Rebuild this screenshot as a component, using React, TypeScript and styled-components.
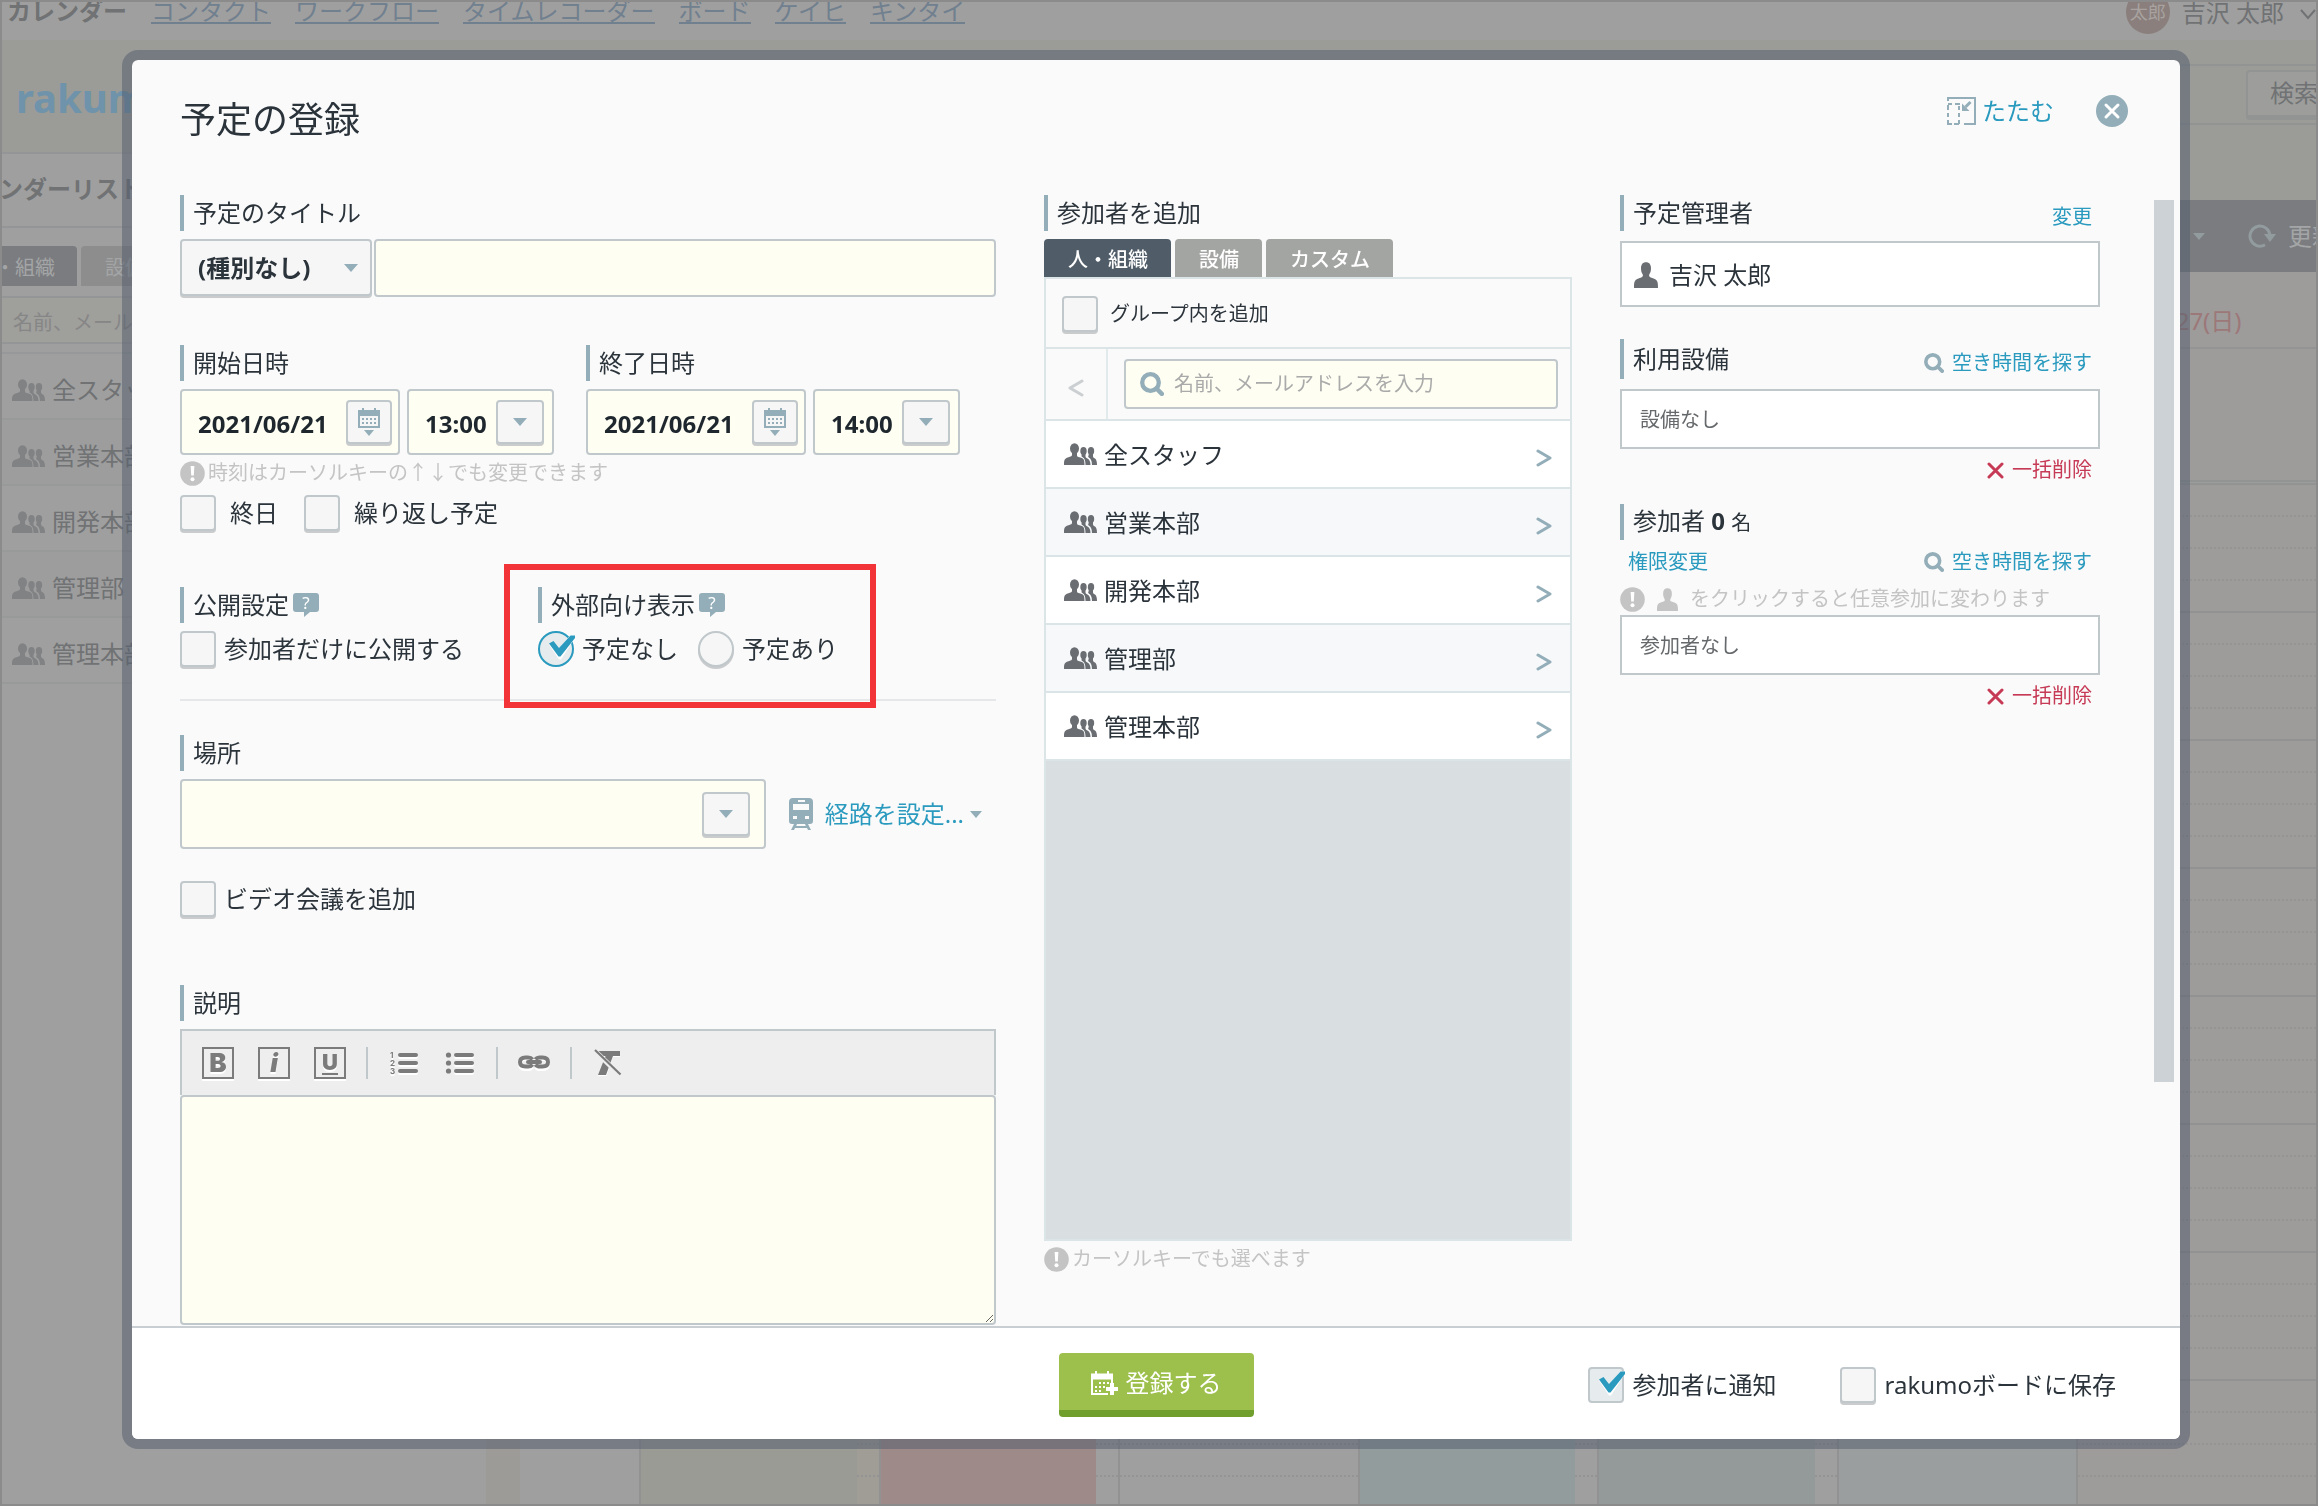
import React, { useState } from "react";
import styled, { createGlobalStyle, css } from "styled-components";

const color = {
  ink: "#2b333b",
  link: "#2a9abf",
  accent: "#93aeb9",
  line: "#c0c8cb",
  hint: "#c4c4c4",
  cream: "#fefef2",
  danger: "#c63a56",
};

const GlobalStyle = createGlobalStyle`
  *, *::before, *::after { box-sizing: border-box; }
  html, body { margin: 0; height: 100%; overflow: hidden; }
  body {
    background: #9f9f9f;
    color: ${color.ink};
    font-family: "Noto Sans", "Noto Sans CJK JP", sans-serif;
    font-size: 24px;
    line-height: 36px;
  }
  button, input, select, textarea { font: inherit; color: inherit; margin: 0; }
  button { cursor: pointer; }
  a { text-decoration: none; }
  h1, h2, p, ul { margin: 0; padding: 0; font-weight: 400; }
  svg { display: block; flex: none; }
`;

/* ---------- icons ---------- */

const GroupIcon = ({ fill = "#6a6d72" }: { fill?: string }) => (
  <svg width="33" height="22" viewBox="0 0 33 22" fill={fill} aria-hidden="true">
    <ellipse cx="10.500" cy="5.500" rx="4.500" ry="5.300" />
    <path d="M8 8h5v4.500q0 1 1.500 1.500C20 15.500 20.500 16 20.500 22H0c0-6 .5-6.500 6.500-8.500Q8 13 8 12z" />
    <ellipse cx="19.500" cy="8" rx="3.200" ry="4" />
    <path d="M18 10h3.500v3.500q0 1 1.500 1.800 3.500 1.700 3.500 6.700h-5q0-6-2.500-7.500-2-1-1.500-2.500z" />
    <ellipse cx="27" cy="8" rx="3.200" ry="4" />
    <path d="M25 10h4v3.500q0 1 1.500 1.800Q33 16.500 33 22h-5q0-5.500-3-7.200-1.500-.8-.5-2.300z" />
  </svg>
);

const PersonIcon = ({ fill = "#6a6d72", size = 24 }: { fill?: string; size?: number }) => (
  <svg width={size} height={size + 2} viewBox="0 0 24 26" fill={fill} aria-hidden="true">
    <path d="M0 26c0-7.500.5-8.600 7.300-10.600 1.700-.6 2-2 1.200-3.400C7.400 10.500 7 8.400 7 6.200 7 2.300 8.800.2 12 .2s5 2.100 5 6c0 2.200-.4 4.300-1.500 5.800-.8 1.400-.5 2.800 1.200 3.400C23.500 17.400 24 18.500 24 26z" />
  </svg>
);

const SearchIcon = ({ size = 24 }: { size?: number }) => (
  <svg width={size} height={size} viewBox="0 0 24 24" fill="none" stroke={color.accent} aria-hidden="true">
    <circle cx="10.500" cy="10.500" r="8.300" strokeWidth="4.300" />
    <path d="M16.500 16.500l5.300 5.300" strokeWidth="4.500" strokeLinecap="round" />
  </svg>
);

const CalendarIcon = () => (
  <svg width="24" height="30" viewBox="0 0 24 30" fill={color.accent} aria-hidden="true">
    <path d="M1 3h22v18H1zM3 9v10h18V9z" fillRule="evenodd" />
    <path d="M5 1h2v3H5zM17 1h2v3h-2z" />
    <path d="M5 11h2v2H5zM9 11h2v2H9zM13 11h2v2h-2zM17 11h2v2h-2zM5 15h2v2H5zM9 15h2v2H9zM13 15h2v2h-2zM17 15h2v2h-2z" />
    <path d="M7 23h10l-5 6z" />
  </svg>
);

const SaveCalendarIcon = () => (
  <svg width="27" height="25" viewBox="0 0 27 25" fill="#fff" aria-hidden="true">
    <path d="M0 2.500h22V13h-2V8.500H2V22h15v2H0z" />
    <path d="M4 0h2v4H4zM16 0h2v4h-2z" />
    <path d="M8 11h2v2H8zM12 11h2v2h-2zM16 11h2v2h-2zM4 15h2v2H4zM8 15h2v2H8zM12 15h2v2h-2zM4 19h2v2H4zM8 19h2v2H8z" />
    <path d="M19 12h4v4h4v4h-4v4h-4v-4h-4v-4h4z" />
  </svg>
);

const FoldIcon = () => (
  <svg width="29" height="28" viewBox="0 0 29 28" fill="none" stroke={color.accent} strokeWidth="2" aria-hidden="true">
    <path d="M1 4V1h27v26H17" />
    <path d="M1 8v5M1 16v4M1 23v4h4M7 27h5M12 23v4M12 16v4M12 9v4M1 7h4M8 7h5" />
    <path d="M23.500 5l-5 5" strokeWidth="3" />
    <path d="M15 6.500V14h7.500z" fill={color.accent} stroke="none" />
  </svg>
);

const CloseIcon = () => (
  <svg width="32" height="32" viewBox="0 0 32 32" aria-hidden="true">
    <circle cx="16" cy="16" r="16" fill={color.accent} />
    <path d="M10 10l12 12M22 10L10 22" stroke="#fff" strokeWidth="3" strokeLinecap="round" />
  </svg>
);

const AlertIcon = () => (
  <svg width="25" height="25" viewBox="0 0 25 25" aria-hidden="true">
    <circle cx="12.500" cy="12.500" r="12.300" fill={color.hint} />
    <path d="M10.600 5h3.800l-.6 9.500h-2.600z" fill="#fff" />
    <circle cx="12.500" cy="18.200" r="2" fill="#fff" />
  </svg>
);

const HelpIcon = () => (
  <svg width="26" height="24" viewBox="0 0 26 24" aria-hidden="true">
    <path d="M3 0h20q3 0 3 3v13q0 3-3 3h-6l-6 5V19H3q-3 0-3-3V3q0-3 3-3z" fill={color.accent} />
    <text x="13" y="16" fontSize="17" textAnchor="middle" fill="#fff">?</text>
  </svg>
);

const TrainIcon = () => (
  <svg width="24" height="32" viewBox="0 0 24 32" fill={color.accent} aria-hidden="true">
    <path fillRule="evenodd" d="M4 0h16q4 0 4 4v19q0 3-3 3H3q-3 0-3-3V4q0-4 4-4zM9 2v2h7V2zM4 6v6h16V6zM4 18v3h4v-3zM16 18v3h4v-3z" />
    <path d="M5 26h3l-.8 2h9.600L16 26h3l3 6h-3l-1-2H6l-1 2H2z" />
  </svg>
);

const DeleteIcon = () => (
  <svg width="17" height="17" viewBox="0 0 17 17" stroke={color.danger} strokeWidth="3" strokeLinecap="round" aria-hidden="true">
    <path d="M2 2l13 13M15 2L2 15" />
  </svg>
);

const Chevron = ({ left = false }: { left?: boolean }) => (
  <svg width="16" height="18" viewBox="0 0 16 18" fill="none" stroke={left ? "#cbcfd1" : color.accent} strokeWidth="3" strokeLinecap="round" strokeLinejoin="round" aria-hidden="true">
    <path d={left ? "M14 2L2 9l12 7" : "M2 2l12 7-12 7"} />
  </svg>
);

const CheckMark = () => (
  <svg width="28" height="26" viewBox="0 0 28 26" aria-hidden="true">
    <path d="M1 9.500l5-3 5 7L22 .5h4.500v3L13 24.500h-2z" fill="#fff" />
    <path d="M1 8.500l4.500-2.500 5.500 7L22.500.5H27V3L12.500 21.500h-2z" fill={color.link} />
  </svg>
);

const ListIcon = ({ ordered = false }: { ordered?: boolean }) => (
  <svg width="32" height="26" viewBox="0 0 32 26" fill="#7b7b7b" aria-hidden="true">
    {[3, 11, 19].map((y, i) => (
      <g key={y}>
        <rect x="10" y={y + 2} width="20" height="4" rx="2" fill="#fff" />
        <rect x="10" y={y} width="20" height="4" rx="2" />
        {ordered ? (
          <text x="2" y={y + 5} fontSize="8" fontWeight="700">{i + 1}</text>
        ) : (
          <circle cx="4.500" cy={y + 2} r="2.600" />
        )}
      </g>
    ))}
  </svg>
);

const LinkIcon = () => (
  <svg width="32" height="16" viewBox="0 0 32 16" fill="none" strokeWidth="4" aria-hidden="true">
    <g stroke="#fff">
      <path d="M14 6q-1-2-4-2H7Q2 4 2 9t5 5h3q3 0 4-2M18 6q1-2 4-2h3q5 0 5 5t-5 5h-3q-3 0-4-2" />
    </g>
    <g stroke="#7b7b7b">
      <path d="M14.500 4.500Q13 2.500 10 2.500H7.500Q2 2.500 2 7t5.500 4.500H10q3 0 4.500-2M17.500 4.500q1.500-2 4.500-2h2.500q5.500 0 5.500 4.500t-5.500 4.500H22q-3 0-4.500-2" />
      <path d="M10 7h12" strokeLinecap="round" />
    </g>
  </svg>
);

const ClearFormatIcon = () => (
  <svg width="28" height="28" viewBox="0 0 28 28" aria-hidden="true">
    <path d="M4 4h22v4h-7l-6.500 19H4l8-19H4z" fill="#fff" />
    <path d="M3 2h23v5h-7l-7 19H4l7.500-19H3z" fill="#7b7b7b" />
    <path d="M1 2l26 25" stroke="#eee" strokeWidth="5" />
    <path d="M1 1l25.500 24.500" stroke="#7b7b7b" strokeWidth="2.200" />
  </svg>
);

const RefreshIcon = () => (
  <svg width="28" height="24" viewBox="0 0 28 24" fill="none" stroke="#929b9e" strokeWidth="3" aria-hidden="true">
    <path d="M17 20.800A10 10 0 1 1 22 12" />
    <path d="M16 10h12l-6 8z" fill="#929b9e" stroke="none" />
  </svg>
);

const Arrow = styled.span<{ $tone?: string; $small?: boolean }>`
  flex: none;
  border: ${(p) => (p.$small ? 6 : 7)}px solid transparent;
  border-top: ${(p) => (p.$small ? 7 : 8)}px solid ${(p) => p.$tone ?? color.accent};
  border-bottom: 0;
`;

/* ---------- page behind the dialog ---------- */

const Page = styled.div`
  display: flex;
  flex-direction: column;
  height: 100vh;
  overflow: hidden;
  border: 2px solid #8b8b8b;
  color: #707274;
`;

const Nav = styled.nav`
  flex: none;
  display: flex;
  align-items: flex-start;
  gap: 24px;
  height: 38px;
  padding-left: 5px;
  line-height: 18px;
  white-space: nowrap;
`;

const NavLink = styled.a`
  padding-bottom: 2px;
  border-bottom: 2px solid #71808f;
  color: #71808f;
`;

const Account = styled.div`
  display: flex;
  gap: 12px;
  margin-left: auto;
  line-height: 22px;
`;

const Avatar = styled.span`
  width: 44px;
  height: 44px;
  margin-top: -12px;
  border-radius: 50%;
  background: #8a7f7c;
  color: #a8a3a1;
  font-size: 18px;
  line-height: 44px;
  text-align: center;
`;

const Header = styled.header`
  flex: none;
  display: flex;
  justify-content: space-between;
  height: 112px;
  background: #9b9b97;
`;

const Logo = styled.div`
  padding: 28px 0 0 14px;
  color: #6f93aa;
  font-size: 40px;
  font-weight: 700;
  line-height: 60px;
`;

const HeaderSearch = styled.div`
  display: flex;
  justify-content: flex-end;
  align-items: center;
  width: 400px;
  height: 61px;
  margin-top: 24px;
  border-block: 2px solid #929494;
`;

const HeaderButton = styled.button`
  flex: none;
  height: 50px;
  margin-right: -26px;
  padding: 0 22px;
  border: 2px solid #929494;
  border-bottom-width: 5px;
  border-radius: 4px;
  background: #9d9d9b;
`;

const Main = styled.div`
  flex: 1;
  display: flex;
  min-height: 0;
`;

const Sidebar = styled.aside`
  flex: 0 0 535px;
  margin-left: -51px;
  background: #9f9f9f;
`;

const SideTitle = styled.h2`
  height: 76px;
  border-block: 2px solid #949596;
  font-size: 24px;
  font-weight: 700;
  line-height: 70px;
`;

const SideTabs = styled.div`
  display: flex;
  gap: 4px;
  margin-top: 18px;
`;

const SideTab = styled.button<{ $active?: boolean }>`
  height: 40px;
  padding: 4px 22px 0 24px;
  border: 0;
  border-radius: 4px 4px 0 0;
  background: ${(p) => (p.$active ? "#7b7c80" : "#8d8d8d")};
  color: #a3a5a6;
  font-size: 20px;
`;

const SideInput = styled.input`
  display: block;
  width: 100%;
  height: 48px;
  margin: 10px 0 8px;
  padding: 4px 0 0 60px;
  border: 2px solid #949596;
  background: #9f9f9c;
  font-size: 20px;
  &::placeholder { color: #868686; opacity: 1; }
`;

const SideList = styled.ul`
  list-style: none;
  border-top: 2px solid #979899;
`;

const SideItem = styled.li`
  display: flex;
  align-items: center;
  gap: 7px;
  height: 66px;
  padding: 8px 0 0 61px;
  border-bottom: 2px solid #989999;
  &:nth-child(even) { background: #9d9d9e; }
`;

const Gutter = styled.div`
  flex: 0 0 34px;
  background: #9c9b97;
`;

const Calendar = styled.section`
  flex: 1;
  display: flex;
  flex-direction: column;
  min-width: 0;
`;

const CalendarTop = styled.div`
  flex: none;
  height: 48px;
  background: #9b9b97;
`;

const CalendarBar = styled.div`
  flex: none;
  display: flex;
  justify-content: flex-end;
  align-items: center;
  gap: 13px;
  height: 72px;
  background: #7b7c80;
  color: #a3a5a6;
`;

const BarMenu = styled.button`
  display: flex;
  padding: 0 30px 0 0;
  border: 0;
  background: none;
`;

const BarButton = styled.button`
  display: flex;
  align-items: center;
  gap: 12px;
  margin-right: -20px;
  padding: 0;
  border: 0;
  background: none;
`;

const Days = styled.div`
  flex: 1;
  display: flex;
  min-height: 0;
  padding-left: 119px;
`;

const Day = styled.div<{ $tone: string }>`
  position: relative;
  flex: 1;
  overflow: hidden;
  border-left: 2px solid #929292;
  background: ${(p) => p.$tone};
`;

const DayName = styled.div<{ $sunday?: boolean }>`
  height: 77px;
  padding-top: 12px;
  border-bottom: 2px solid #949494;
  color: ${(p) => (p.$sunday ? "#9c7878" : "inherit")};
  line-height: 74px;
  text-align: center;
`;

const AllDay = styled.div`
  height: 136px;
  border-bottom: 5px double #929494;
`;

const Slot = styled.div<{ $hour: boolean }>`
  height: 32px;
  border-bottom: ${(p) => (p.$hour ? "2px solid #939292" : "2px dotted #959494")};
`;

const Event = styled.div<{ $tone: string; $wide?: boolean }>`
  position: absolute;
  inset: 900px ${(p) => (p.$wide ? "0" : "22px")} 0 0;
  background: ${(p) => p.$tone};
`;

/* ---------- dialog ---------- */

const Overlay = styled.div`
  position: fixed;
  inset: 0;
  display: flex;
  padding: 50px 128px 57px 122px;
`;

const Dialog = styled.form`
  flex: 1;
  display: flex;
  flex-direction: column;
  min-width: 0;
  overflow: hidden;
  border: 10px solid rgba(81, 91, 107, 0.500);
  border-radius: 16px;
  background: #fafafa;
  background-clip: padding-box;
`;

const DialogHeader = styled.div`
  flex: none;
  display: flex;
  justify-content: space-between;
  align-items: flex-start;
  height: 135px;
  padding: 35px 52px 0 48px;
`;

const DialogTitle = styled.h1`
  font-size: 36px;
  line-height: 50px;
`;

const HeaderActions = styled.div`
  display: flex;
  align-items: center;
  gap: 42px;
  height: 32px;
`;

const PlainButton = styled.button`
  display: flex;
  align-items: center;
  gap: 6px;
  padding: 0;
  border: 0;
  background: none;
  color: ${color.link};
  line-height: 32px;
`;

const DialogBody = styled.div`
  flex: 1;
  display: flex;
  min-height: 0;
  padding: 0 6px 0 48px;
`;

const Columns = styled.div`
  flex: 1;
  display: grid;
  grid-template-columns: 816fr 528fr 480fr;
  column-gap: 48px;
  min-width: 0;
`;

const Column = styled.div`
  display: flex;
  flex-direction: column;
  min-width: 0;
`;

const ScrollThumb = styled.div`
  flex: 0 0 20px;
  height: 78%;
  margin: 5px 0 0 54px;
  background: #cdd2d6;
`;

const Section = styled.section<{ $top?: number }>`
  margin-top: ${(p) => p.$top ?? 0}px;
`;

const Label = styled.div<{ $height?: number }>`
  display: flex;
  align-items: center;
  gap: 4px;
  height: ${(p) => p.$height ?? 36}px;
  margin-bottom: 8px;
  padding-left: 9px;
  border-left: 4px solid ${color.accent};
  white-space: nowrap;
`;

const LabelRow = styled.div`
  display: flex;
  justify-content: space-between;
  align-items: center;
  margin-bottom: 2px;
  padding-right: 8px;
`;

const Row = styled.div<{ $gap?: number }>`
  display: flex;
  align-items: flex-start;
  gap: ${(p) => p.$gap ?? 0}px;
`;

const raised = css`
  border: 2px solid ${color.line};
  border-radius: 4px;
  background: #f6f6f6;
  box-shadow: 0 2px 0 #c9cbcc;
`;

const SelectWrap = styled.div`
  display: grid;
  align-items: center;
  flex: none;
  width: 192px;
  > * { grid-area: 1 / 1; }
  > span { justify-self: end; margin-right: 14px; pointer-events: none; }
`;

const Select = styled.select`
  ${raised}
  appearance: none;
  width: 100%;
  height: 57px;
  padding: 0 36px 0 16px;
  color: ${color.ink};
  font-weight: 700;
`;

const TitleInput = styled.input`
  flex: 1;
  min-width: 0;
  height: 58px;
  padding: 0 16px;
  border: 2px solid ${color.line};
  border-radius: 4px;
  background: ${color.cream};
`;

const Field = styled.div<{ $width?: number; $height: number; $end: number }>`
  flex: ${(p) => (p.$width ? `0 0 ${p.$width}px` : "1")};
  display: flex;
  align-items: center;
  min-width: 0;
  height: ${(p) => p.$height}px;
  padding-right: ${(p) => p.$end}px;
  border: 2px solid ${color.line};
  border-radius: 4px;
  background: ${color.cream};
`;

const FieldInput = styled.input`
  flex: 1;
  min-width: 0;
  height: 100%;
  padding: 2px 0 0 16px;
  border: 0;
  outline: 0;
  background: none;
  color: #1f272e;
  font-weight: 700;
`;

const FieldButton = styled.button<{ $narrow?: boolean }>`
  ${raised}
  flex: none;
  display: flex;
  align-items: center;
  justify-content: center;
  width: ${(p) => (p.$narrow ? 46 : 48)}px;
  height: 44px;
  padding: 0;
`;

const Hint = styled.p<{ $top?: number; $gap?: number }>`
  display: flex;
  align-items: center;
  gap: ${(p) => p.$gap ?? 3}px;
  height: 26px;
  margin-top: ${(p) => p.$top ?? 5}px;
  color: ${color.hint};
  font-size: 20px;
  line-height: 26px;
  white-space: nowrap;
`;

const ChoiceLabel = styled.label<{ $gap?: number; $small?: boolean }>`
  display: flex;
  align-items: center;
  gap: ${(p) => p.$gap ?? 8}px;
  width: fit-content;
  height: 36px;
  font-size: ${(p) => (p.$small ? 20 : 24)}px;
  line-height: 36px;
  white-space: nowrap;
`;

const ChoiceBox = styled.span`
  position: relative;
  flex: none;
  width: 36px;
  height: 36px;
  > svg { position: absolute; left: 10px; top: 4px; pointer-events: none; }
`;

const ChoiceInput = styled.input`
  ${raised}
  appearance: none;
  display: block;
  width: 36px;
  height: 36px;
  &[type="radio"] { border-radius: 50%; }
  &:checked { background: #e6ebee; box-shadow: none; }
  &[type="radio"]:checked { border-color: ${color.link}; }
`;

const Marked = styled.div`
  position: relative;
  &::after {
    content: "";
    position: absolute;
    left: -34px;
    top: -23px;
    width: 372px;
    height: 144px;
    border: 6px solid #f23438;
    pointer-events: none;
  }
`;

const Divider = styled.hr`
  flex: none;
  width: 100%;
  height: 2px;
  margin: 32px 0 0;
  border: 0;
  background: #e5e7e8;
`;

const RouteButton = styled(PlainButton)`
  align-self: center;
  gap: 12px;
  margin: 0 14px 0 23px;
  white-space: nowrap;
  > ${Arrow} { margin-left: -6px; }
`;

const Toolbar = styled.div`
  display: flex;
  align-items: center;
  gap: 24px;
  height: 66px;
  padding-left: 20px;
  border: 2px solid ${color.line};
  border-bottom: 0;
  background: #eee;
`;

const ToolButton = styled.button<{ $boxed?: boolean }>`
  display: flex;
  align-items: center;
  justify-content: center;
  width: 32px;
  height: 32px;
  padding: 0;
  border: ${(p) => (p.$boxed ? "2px solid #7b7b7b" : "0")};
  background: none;
  box-shadow: ${(p) => (p.$boxed ? "0 2px 0 #fff" : "none")};
  color: #7b7b7b;
  font-family: Inter, "Noto Sans", sans-serif;
  font-size: 26px;
  font-weight: 900;
  line-height: 28px;
  text-shadow: 0 2px 0 #fff;
  > i { font-style: italic; }
  > u {
    height: 23px;
    border-bottom: 2px solid #7b7b7b;
    font-size: 22px;
    line-height: 20px;
    text-decoration: none;
  }
`;

const ToolSeparator = styled.span`
  width: 2px;
  height: 32px;
  margin: 0 -4px;
  background: ${color.line};
`;

const Description = styled.textarea`
  display: block;
  width: 100%;
  height: 230px;
  padding: 12px;
  border: 2px solid ${color.line};
  border-radius: 4px;
  background: ${color.cream};
  resize: vertical;
`;

const Tabs = styled.div`
  display: flex;
  gap: 4px;
`;

const Tab = styled.button<{ $active: boolean }>`
  height: 38px;
  padding: 4px 23px 0 24px;
  border: 0;
  border-radius: 4px 4px 0 0;
  background: ${(p) => (p.$active ? "#505d69" : "#a3a5a2")};
  color: #fff;
  font-size: 20px;
  font-weight: 500;
  line-height: 34px;
`;

const Panel = styled.div`
  height: 964px;
  border: 2px solid #dbe4e6;
  background: #d9dee0;
`;

const PanelRow = styled.div`
  display: flex;
  align-items: center;
  height: 70px;
  padding: 2px 0 0 16px;
  border-bottom: 2px solid #dbe4e6;
  background: #fafafa;
`;

const SearchRow = styled.div`
  display: flex;
  align-items: center;
  height: 72px;
  padding-right: 12px;
  border-bottom: 2px solid #dbe4e6;
  background: #fafafa;
`;

const BackButton = styled.button`
  display: flex;
  align-items: center;
  justify-content: center;
  width: 62px;
  height: 100%;
  margin-right: 16px;
  padding: 8px 0 0;
  border: 0;
  border-right: 2px solid #e3eaec;
  background: none;
`;

const SearchField = styled.label`
  flex: 1;
  display: flex;
  align-items: center;
  gap: 10px;
  min-width: 0;
  height: 50px;
  padding-left: 14px;
  border: 2px solid ${color.line};
  border-radius: 4px;
  background: ${color.cream};
`;

const SearchInput = styled.input`
  flex: 1;
  min-width: 0;
  padding: 0;
  border: 0;
  outline: 0;
  background: none;
  font-size: 20px;
  &::placeholder { color: #aaa; opacity: 1; }
`;

const GroupButton = styled.button`
  display: flex;
  align-items: center;
  gap: 7px;
  width: 100%;
  height: 68px;
  padding: 2px 18px 0;
  border: 0;
  border-bottom: 2px solid #dbe4e6;
  background: #fff;
  text-align: left;
  &:nth-of-type(even) { background: #f6f8fa; }
  > span { flex: 1; }
  > svg { margin-bottom: 2px; }
  > svg:last-child { margin: 6px 0 0; }
`;

const SmallLink = styled.a<{ $danger?: boolean }>`
  display: flex;
  align-items: center;
  gap: 8px;
  color: ${(p) => (p.$danger ? color.danger : color.link)};
  font-size: 20px;
  line-height: 24px;
  white-space: nowrap;
`;

const LinkRow = styled.div<{ $top: number }>`
  display: flex;
  justify-content: space-between;
  height: 24px;
  margin-top: ${(p) => p.$top}px;
  padding: 0 8px;
  > :only-child { margin-left: auto; }
`;

const Box = styled.div<{ $large?: boolean }>`
  display: flex;
  align-items: center;
  gap: 11px;
  height: ${(p) => (p.$large ? 66 : 60)}px;
  padding: 2px 0 0 ${(p) => (p.$large ? 12 : 18)}px;
  border: 2px solid ${color.line};
  background: #fff;
  color: ${(p) => (p.$large ? color.ink : "#66696c")};
  font-size: ${(p) => (p.$large ? 24 : 20)}px;
`;

const Unit = styled.span`
  font-size: 20px;
`;

const Footer = styled.div`
  flex: none;
  display: grid;
  grid-template-columns: 1fr auto 1fr;
  align-items: center;
  height: 113px;
  padding: 3px 64px 0;
  border-top: 2px solid #c8ced1;
  background: #fff;
`;

const SubmitButton = styled.button`
  grid-column: 2;
  display: flex;
  align-items: center;
  gap: 8px;
  height: 64px;
  padding: 3px 32px 0;
  border: 0;
  border-bottom: 7px solid #719f2e;
  border-radius: 4px;
  background: #9dc04c;
  color: #fff;
`;

const FooterChoices = styled.div`
  display: flex;
  justify-content: flex-end;
  gap: 64px;
`;

/* ---------- composed parts ---------- */

type ChoiceProps = {
  text: string;
  type?: "checkbox" | "radio";
  name?: string;
  gap?: number;
  small?: boolean;
  checked: boolean;
  onChange: (checked: boolean) => void;
};

const Choice = ({ text, type = "checkbox", name, gap, small, checked, onChange }: ChoiceProps) => (
  <ChoiceLabel $gap={gap} $small={small}>
    <ChoiceBox>
      <ChoiceInput type={type} name={name} checked={checked} onChange={(e) => onChange(e.target.checked)} />
      {checked && <CheckMark />}
    </ChoiceBox>
    {text}
  </ChoiceLabel>
);

const Toggle = ({ initial = false, ...rest }: Omit<ChoiceProps, "checked" | "onChange"> & { initial?: boolean }) => {
  const [checked, setChecked] = useState(initial);
  return <Choice {...rest} checked={checked} onChange={setChecked} />;
};

const DateTime = ({ id, label, date, time }: { id: string; label: string; date: string; time: string }) => (
  <div>
    <Label as="label" htmlFor={id}>{label}</Label>
    <Row $gap={7}>
      <Field $width={220} $height={66} $end={6}>
        <FieldInput id={id} defaultValue={date} />
        <FieldButton type="button" $narrow aria-label="カレンダー"><CalendarIcon /></FieldButton>
      </Field>
      <Field $width={147} $height={66} $end={8}>
        <FieldInput aria-label={label} defaultValue={time} />
        <FieldButton type="button" aria-label="時刻"><Arrow /></FieldButton>
      </Field>
    </Row>
  </div>
);

const groups = ["全スタッフ", "営業本部", "開発本部", "管理部", "管理本部"];
const services = ["コンタクト", "ワークフロー", "タイムレコーダー", "ボード", "ケイヒ", "キンタイ"];
const days = [
  { id: "mon", tone: "#9f9d96", event: "#999b94" },
  { id: "tue", tone: "#9f9f9f", event: "#9e8a89" },
  { id: "wed", tone: "#9f9f9f" },
  { id: "thu", tone: "#9f9f9f", event: "#929c9d" },
  { id: "fri", tone: "#9f9f9f", event: "#949999" },
  { id: "sat", tone: "#9f9f9f", event: "#9a9e9e", wide: true },
  { id: "sun", tone: "#9e9b9b", name: "6/27(日)" },
];

const Background = () => (
  <Page aria-hidden="true">
    <Nav>
      <b>カレンダー</b>
      {services.map((s) => <NavLink href="#" key={s}>{s}</NavLink>)}
      <Account>
        <Avatar>太郎</Avatar>
        <span>吉沢 太郎</span>
        <svg width="20" height="22" viewBox="0 0 20 22" fill="none" stroke="#707274" strokeWidth="2">
          <path d="M5 8l7 8 7-8" />
        </svg>
      </Account>
    </Nav>
    <Header>
      <Logo>rakumo</Logo>
      <HeaderSearch><HeaderButton>検索</HeaderButton></HeaderSearch>
    </Header>
    <Main>
      <Sidebar>
        <SideTitle>カレンダーリスト</SideTitle>
        <SideTabs>
          <SideTab $active>人・組織</SideTab>
          <SideTab>設備</SideTab>
        </SideTabs>
        <SideInput placeholder="名前、メールアドレスを入力" />
        <SideList>
          {groups.map((g) => <SideItem key={g}><GroupIcon fill="#808284" />{g}</SideItem>)}
        </SideList>
      </Sidebar>
      <Gutter />
      <Calendar>
        <CalendarTop />
        <CalendarBar>
          <BarMenu><Arrow $small $tone="#929b9e" /></BarMenu>
          <BarButton><RefreshIcon />更新</BarButton>
        </CalendarBar>
        <Days>
          {days.map((d) => (
            <Day key={d.id} $tone={d.tone}>
              <DayName $sunday={d.id === "sun"}>{d.name}</DayName>
              <AllDay />
              {Array.from({ length: 32 }, (_, i) => <Slot key={i} $hour={i % 4 === 3} />)}
              {d.event && <Event $tone={d.event} $wide={d.wide} />}
            </Day>
          ))}
        </Days>
      </Calendar>
    </Main>
  </Page>
);

const DetailsColumn = () => {
  const [busy, setBusy] = useState(false);
  return (
    <Column>
      <Section>
        <Label as="label" htmlFor="title">予定のタイトル</Label>
        <Row $gap={2}>
          <SelectWrap>
            <Select aria-label="種別"><option>(種別なし)</option></Select>
            <Arrow />
          </SelectWrap>
          <TitleInput id="title" />
        </Row>
      </Section>
      <Section $top={48}>
        <Row $gap={32}>
          <DateTime id="start" label="開始日時" date="2021/06/21" time="13:00" />
          <DateTime id="end" label="終了日時" date="2021/06/21" time="14:00" />
        </Row>
        <Hint><AlertIcon />時刻はカーソルキーの↑↓でも変更できます</Hint>
      </Section>
      <Section $top={9}>
        <Row $gap={26}>
          <Toggle text="終日" gap={14} />
          <Toggle text="繰り返し予定" gap={14} />
        </Row>
      </Section>
      <Section $top={56}>
        <Row $gap={74}>
          <div>
            <Label>公開設定<HelpIcon /></Label>
            <Toggle text="参加者だけに公開する" />
          </div>
          <Marked role="radiogroup" aria-labelledby="external">
            <Label id="external">外部向け表示<HelpIcon /></Label>
            <Row $gap={20}>
              <Choice type="radio" name="external" text="予定なし" checked={!busy} onChange={() => setBusy(false)} />
              <Choice type="radio" name="external" text="予定あり" checked={busy} onChange={() => setBusy(true)} />
            </Row>
          </Marked>
        </Row>
      </Section>
      <Divider />
      <Section $top={34}>
        <Label as="label" htmlFor="place">場所</Label>
        <Row>
          <Field $height={70} $end={14}>
            <FieldInput id="place" />
            <FieldButton type="button" aria-label="場所を選ぶ"><Arrow /></FieldButton>
          </Field>
          <RouteButton type="button"><TrainIcon />経路を設定...<Arrow $small /></RouteButton>
        </Row>
      </Section>
      <Section $top={32}>
        <Row><Toggle text="ビデオ会議を追加" /></Row>
      </Section>
      <Section $top={68}>
        <Label as="label" htmlFor="description">説明</Label>
        <Toolbar>
          <ToolButton type="button" $boxed>B</ToolButton>
          <ToolButton type="button" $boxed><i>i</i></ToolButton>
          <ToolButton type="button" $boxed><u>U</u></ToolButton>
          <ToolSeparator />
          <ToolButton type="button" aria-label="番号付きリスト"><ListIcon ordered /></ToolButton>
          <ToolButton type="button" aria-label="リスト"><ListIcon /></ToolButton>
          <ToolSeparator />
          <ToolButton type="button" aria-label="リンク"><LinkIcon /></ToolButton>
          <ToolSeparator />
          <ToolButton type="button" aria-label="書式をクリア"><ClearFormatIcon /></ToolButton>
        </Toolbar>
        <Description id="description" />
      </Section>
    </Column>
  );
};

const PickerColumn = () => {
  const [tab, setTab] = useState("人・組織");
  return (
    <Column>
      <Label>参加者を追加</Label>
      <Tabs role="tablist">
        {["人・組織", "設備", "カスタム"].map((t) => (
          <Tab key={t} type="button" role="tab" aria-selected={t === tab} $active={t === tab} onClick={() => setTab(t)}>
            {t}
          </Tab>
        ))}
      </Tabs>
      <Panel>
        <PanelRow><Toggle text="グループ内を追加" gap={12} small /></PanelRow>
        <SearchRow>
          <BackButton type="button" aria-label="戻る"><Chevron left /></BackButton>
          <SearchField>
            <SearchIcon />
            <SearchInput placeholder="名前、メールアドレスを入力" />
          </SearchField>
        </SearchRow>
        {groups.map((g) => (
          <GroupButton type="button" key={g}>
            <GroupIcon />
            <span>{g}</span>
            <Chevron />
          </GroupButton>
        ))}
      </Panel>
      <Hint><AlertIcon />カーソルキーでも選べます</Hint>
    </Column>
  );
};

const SummaryColumn = () => (
  <Column>
    <Section>
      <LabelRow>
        <Label>予定管理者</Label>
        <SmallLink href="#">変更</SmallLink>
      </LabelRow>
      <Box $large><PersonIcon />吉沢 太郎</Box>
    </Section>
    <Section $top={32}>
      <LabelRow>
        <Label $height={40}>利用設備</Label>
        <SmallLink href="#"><SearchIcon size={20} />空き時間を探す</SmallLink>
      </LabelRow>
      <Box>設備なし</Box>
      <LinkRow $top={9}>
        <SmallLink href="#" $danger><DeleteIcon />一括削除</SmallLink>
      </LinkRow>
    </Section>
    <Section $top={22}>
      <Label>
        <span>参加者 <b>0</b> <Unit>名</Unit></span>
      </Label>
      <LinkRow $top={10}>
        <SmallLink href="#">権限変更</SmallLink>
        <SmallLink href="#"><SearchIcon size={20} />空き時間を探す</SmallLink>
      </LinkRow>
      <Hint $top={12} $gap={12}>
        <AlertIcon />
        <PersonIcon fill={color.hint} size={21} />
        をクリックすると任意参加に変わります
      </Hint>
      <Section $top={3}>
        <Box>参加者なし</Box>
        <LinkRow $top={9}>
          <SmallLink href="#" $danger><DeleteIcon />一括削除</SmallLink>
        </LinkRow>
      </Section>
    </Section>
  </Column>
);

export default function App() {
  return (
    <>
      <GlobalStyle />
      <Background />
      <Overlay>
        <Dialog role="dialog" aria-labelledby="dialog-title" onSubmit={(e) => e.preventDefault()}>
          <DialogHeader>
            <DialogTitle id="dialog-title">予定の登録</DialogTitle>
            <HeaderActions>
              <PlainButton type="button"><FoldIcon />たたむ</PlainButton>
              <PlainButton type="button" aria-label="閉じる"><CloseIcon /></PlainButton>
            </HeaderActions>
          </DialogHeader>
          <DialogBody>
            <Columns>
              <DetailsColumn />
              <PickerColumn />
              <SummaryColumn />
            </Columns>
            <ScrollThumb />
          </DialogBody>
          <Footer>
            <SubmitButton type="submit"><SaveCalendarIcon />登録する</SubmitButton>
            <FooterChoices>
              <Toggle text="参加者に通知" initial />
              <Toggle text="rakumoボードに保存" />
            </FooterChoices>
          </Footer>
        </Dialog>
      </Overlay>
    </>
  );
}
